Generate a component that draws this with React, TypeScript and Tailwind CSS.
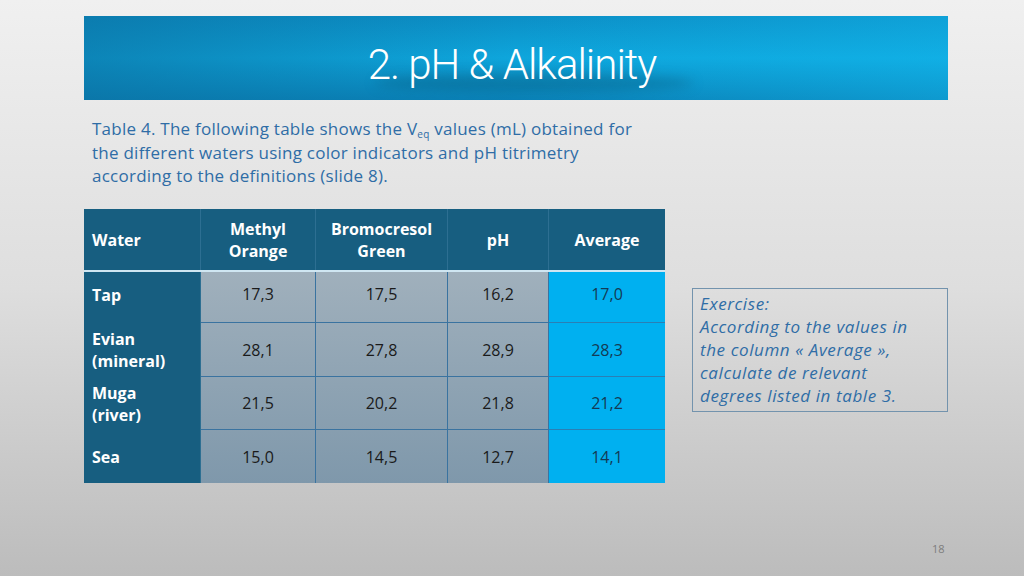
import React from 'react'

const ROWS = [
  { name: ['Tap'], vals: ['17,3', '17,5', '16,2', '17,0'], h: 'h-[51px]' },
  { name: ['Evian', '(mineral)'], vals: ['28,1', '27,8', '28,9', '28,3'], h: 'h-[54px]' },
  { name: ['Muga', '(river)'], vals: ['21,5', '20,2', '21,8', '21,2'], h: 'h-[53px]' },
  { name: ['Sea'], vals: ['15,0', '14,5', '12,7', '14,1'], h: 'h-[53px]' },
]

const COLS = ['w-[117px]', 'w-[115px]', 'w-[132px]', 'w-[101px]', 'w-[116px]']

export default function App() {
  const font = { fontFamily: '"Open Sans", Roboto, sans-serif' }
  return (
    <div className="relative w-[1024px] h-[576px] overflow-hidden bg-gradient-to-b from-[#f0f0f0] via-[#dedede] to-[#bcbcbc]" style={font}>
      {/* Banner */}
      <div className="absolute left-[84px] top-[16px] w-[864px] h-[84px] overflow-hidden bg-gradient-to-b from-[#0c8fc6] via-[#0ea6dc] to-[#0a82b8]">
        <div className="absolute inset-0 bg-gradient-to-r from-[#0b6f9f]/60 via-transparent to-[#14bdf2]/40" />
        <div className="absolute left-[290px] top-[58px] w-[320px] h-[18px] rounded-[50%] bg-[#06506f]/35 blur-[6px]" />
        <div className="relative flex h-full items-center justify-center pt-[12px] pr-[8px]">
          <h1 className="text-[42px] font-light tracking-[-1px] text-white" style={{ fontFamily: 'Roboto, sans-serif' }}>2. pH &amp; Alkalinity</h1>
        </div>
      </div>

      {/* Caption */}
      <p className="absolute left-[92px] top-[117px] w-[600px] text-[17px] leading-[23.5px] text-[#2f6da6] tracking-[0.25px]">
        Table 4. The following table shows the V<sub className="text-[10px]">eq</sub> values (mL) obtained for<br />
        the different waters using color indicators and pH titrimetry<br />
        according to the definitions (slide 8).
      </p>

      {/* Table */}
      <div className="absolute left-[84px] top-[209px] flex flex-col">
        <div className="flex h-[63px] bg-[#175e80] text-white font-bold text-[16px] leading-[22px] border-b-[2px] border-[#cfe6f2]">
          <div className={`${COLS[0]} flex items-center pl-[8px] border-r border-[#2d6f92]`}>Water</div>
          <div className={`${COLS[1]} flex items-center justify-center text-center border-r border-[#2d6f92]`}>Methyl<br />Orange</div>
          <div className={`${COLS[2]} flex items-center justify-center text-center border-r border-[#2d6f92]`}>Bromocresol<br />Green</div>
          <div className={`${COLS[3]} flex items-center justify-center border-r border-[#2d6f92]`}>pH</div>
          <div className={`${COLS[4]} flex items-center justify-center`}>Average</div>
        </div>
        <div className="flex bg-[#175e80]">
          <div className="flex flex-col">
            {ROWS.map((r, i) => (
              <div key={i} className={`${COLS[0]} ${r.h} flex flex-col justify-center pl-[8px] text-white font-bold text-[16px] leading-[22px] border-r border-[#2d6f92] ${i === 0 ? 'pb-[6px]' : ''}`}>
                {r.name.map((n) => <span key={n}>{n}</span>)}
              </div>
            ))}
          </div>
          <div className="flex flex-col bg-gradient-to-b from-[#a0b0bc] to-[#7f98ab]">
            {ROWS.map((r, i) => (
              <div key={i} className={`flex ${r.h} ${i < ROWS.length - 1 ? 'border-b' : ''} border-[#3a73a0]`}>
                {r.vals.slice(0, 3).map((v, j) => (
                  <div key={j} className={`${COLS[j + 1]} flex items-center justify-center text-[16px] text-[#1a1a1a] border-r border-[#3a73a0] ${i === 0 ? 'pb-[6px]' : ''}`}>{v}</div>
                ))}
              </div>
            ))}
          </div>
          <div className="flex flex-col bg-[#00b0f0]">
            {ROWS.map((r, i) => (
              <div key={i} className={`${COLS[4]} ${r.h} flex items-center justify-center text-[16px] text-[#143a55] ${i < ROWS.length - 1 ? 'border-b' : ''} border-[#2a7fb5] ${i === 0 ? 'pb-[6px]' : ''}`}>{r.vals[3]}</div>
            ))}
          </div>
        </div>
      </div>

      {/* Exercise box */}
      <div className="absolute left-[692px] top-[288px] w-[256px] h-[124px] border-[1.5px] border-[#7393ad] px-[7px] pt-[3px] italic text-[17px] leading-[23px] tracking-[0.6px] text-[#2f6da6]">
        Exercise:<br />
        According to the values in<br />
        the column « Average »,<br />
        calculate de relevant<br />
        degrees listed in table 3.
      </div>

      {/* Page number */}
      <div className="absolute left-[932px] top-[541px] text-[11px] text-[#7d7d7d]">18</div>
    </div>
  )
}
